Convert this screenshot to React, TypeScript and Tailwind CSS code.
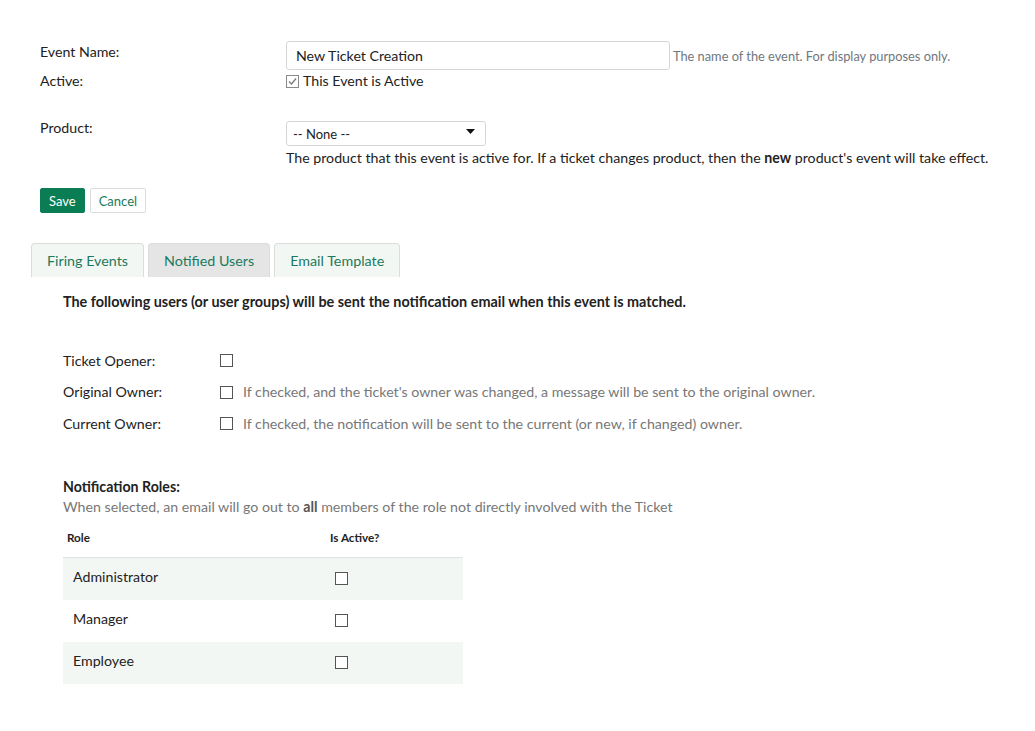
import { FC } from "react";

const Box: FC<{ checked?: boolean; className?: string }> = ({ checked, className = "" }) => (
  <span
    className={`inline-flex w-[13px] h-[13px] shrink-0 items-center justify-center border ${
      checked ? "border-[#8a8a8a]" : "border-[#555]"
    } bg-white ${className}`}
  >
    {checked && (
      <svg width="9" height="9" viewBox="0 0 9 9">
        <path d="M1 4.5 L3.5 7 L8 1.5" fill="none" stroke="#7a7a7a" strokeWidth="1.3" />
      </svg>
    )}
  </span>
);

const owners = [
  { label: "Ticket Opener:", help: "" },
  {
    label: "Original Owner:",
    help: "If checked, and the ticket's owner was changed, a message will be sent to the original owner.",
  },
  {
    label: "Current Owner:",
    help: "If checked, the notification will be sent to the current (or new, if changed) owner.",
  },
];

const roles = ["Administrator", "Manager", "Employee"];

const tabs = [
  { name: "Firing Events", active: false },
  { name: "Notified Users", active: true },
  { name: "Email Template", active: false },
];

const App: FC = () => {
  return (
    <div
      className="min-h-[731px] bg-white text-[#222] text-[14.2px] leading-[20px]"
      style={{ fontFamily: "Lato, 'Open Sans', sans-serif" }}
    >
      <div className="px-[40px] pt-[41px]">
        {/* event name */}
        <div className="flex items-start">
          <div className="w-[246px] pt-[1px]">Event Name:</div>
          <div className="w-[384px] h-[29px] border border-[#d6d6d6] rounded-[3px] px-[9px] flex items-center">
            New Ticket Creation
          </div>
          <div className="ml-[3px] pt-[5px] text-[12.8px] leading-[20px] text-[#6f7780]">
            The name of the event. For display purposes only.
          </div>
        </div>

        {/* active */}
        <div className="flex items-center mt-[1px] h-[20px]">
          <div className="w-[246px]">Active:</div>
          <Box checked />
          <span className="ml-[4px]">This Event is Active</span>
        </div>

        {/* product */}
        <div className="flex items-start mt-[27px]">
          <div className="w-[246px]">Product:</div>
          <div>
            <div className="mt-[3px] w-[200px] h-[25px] border border-[#d6d6d6] rounded-[3px] pl-[6px] pr-[10px] flex items-center justify-between text-[13px]">
              <span>-- None --</span>
              <svg width="9" height="6" viewBox="0 0 9 6" className="mb-[4px]">
                <path d="M0 0 L9 0 L4.5 5 Z" fill="#111" />
              </svg>
            </div>
            <div className="mt-[2px]">
              The product that this event is active for. If a ticket changes product, then the{" "}
              <b>new</b> product's event will take effect.
            </div>
          </div>
        </div>

        {/* buttons */}
        <div className="flex gap-[5px] mt-[20px]">
          <button className="h-[25px] px-[8px] rounded-[2px] bg-[#0a7d55] text-white text-[13px] border border-[#0a7d55]">
            Save
          </button>
          <button className="h-[25px] px-[8px] rounded-[2px] bg-white text-[#1b7a5c] text-[13px] border border-[#dcdcdc]">
            Cancel
          </button>
        </div>
      </div>

      {/* tabs */}
      <div className="flex gap-[4px] pl-[31px] mt-[30px]">
        {tabs.map((t) => (
          <div
            key={t.name}
            className={`h-[34px] px-[15px] flex items-center rounded-t-[4px] border border-b-0 border-[#dcdcdc] text-[14.3px] text-[#1b7a5c] ${
              t.active ? "bg-[#e5e5e5]" : "bg-[#f3f7f4]"
            }`}
          >
            {t.name}
          </div>
        ))}
      </div>

      <div className="px-[63px]">
        <div className="mt-[15px] font-bold text-[14.4px] leading-[20px]">
          The following users (or user groups) will be sent the notification email when this event is matched.
        </div>

        <div className="mt-[33px]">
          {owners.map((o) => (
            <div key={o.label} className="flex items-center h-[31.5px]">
              <div className="w-[157px]">{o.label}</div>
              <Box />
              {o.help && <span className="ml-[10px] text-[#777]">{o.help}</span>}
            </div>
          ))}
        </div>

        <div className="mt-[37px] font-bold">Notification Roles:</div>
        <div className="text-[#777]">
          When selected, an email will go out to <b className="text-[#555]">all</b> members of the role not
          directly involved with the Ticket
        </div>

        <div className="w-[400px] mt-[1px]">
          <div className="flex items-center h-[40px] border-b border-[#e3e3e3] text-[11.7px] font-bold">
            <div className="w-[262px] pl-[4px]">Role</div>
            <div className="pl-[5px]">Is Active?</div>
          </div>
          {roles.map((r, i) => (
            <div
              key={r}
              className={`flex items-center h-[42px] ${i % 2 === 0 ? "bg-[#f3f7f4]" : "bg-white"}`}
            >
              <div className="w-[262px] pl-[10px] pb-[4px]">{r}</div>
              <div className="pl-[10px] flex">
                <Box />
              </div>
            </div>
          ))}
        </div>
      </div>
    </div>
  );
};

export default App;
